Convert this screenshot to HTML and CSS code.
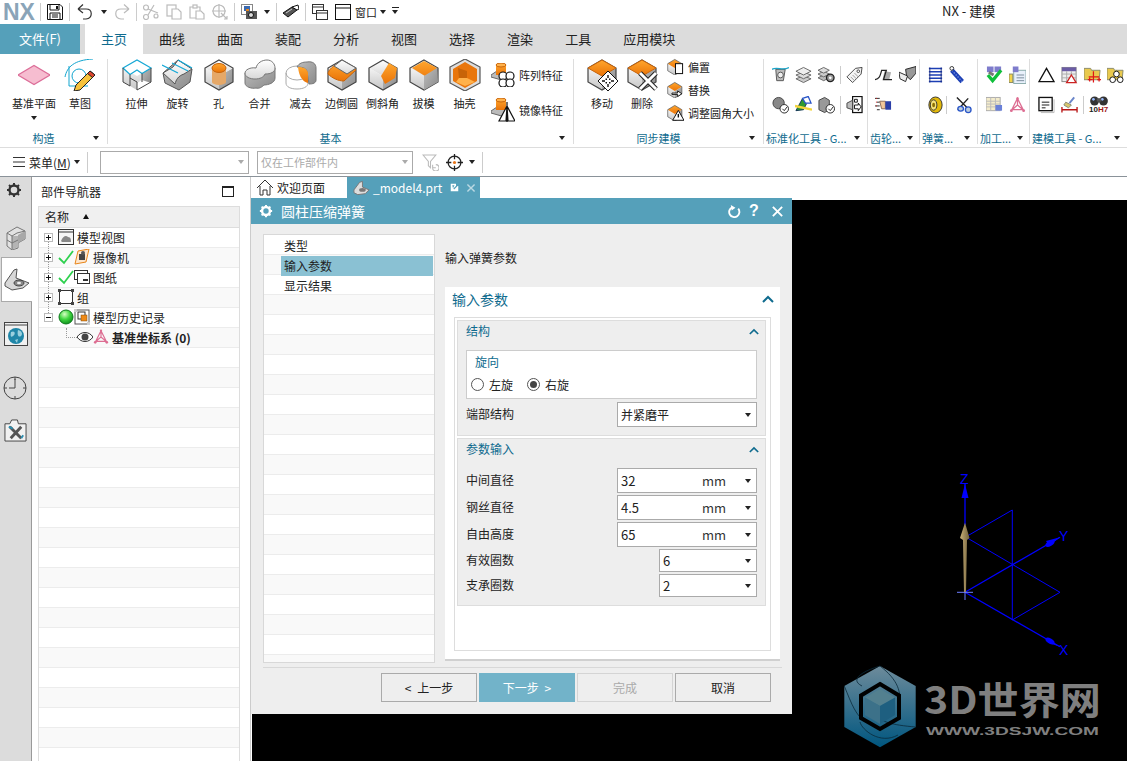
FILE: index.html
```html
<!DOCTYPE html>
<html lang="zh-CN">

<head>
    <meta charset="UTF-8">
    <meta name="viewport" content="width=device-width, initial-scale=1.0">
    <title>NX - 建模</title>
    <link rel="stylesheet" href="styles.css">
</head>

<body>
    <!-- icon sheet -->
    <svg class="icon-sheet" xmlns="http://www.w3.org/2000/svg">
        <defs>
            <linearGradient id="gTop" x1="0" y1="0" x2="0" y2="1"><stop offset="0" stop-color="#ffffff"/><stop offset="1" stop-color="#d8d8d8"/></linearGradient>
            <linearGradient id="gLeft" x1="0" y1="0" x2="0" y2="1"><stop offset="0" stop-color="#f4f4f4"/><stop offset="1" stop-color="#c4c4c4"/></linearGradient>
            <linearGradient id="gRight" x1="0" y1="0" x2="1" y2="1"><stop offset="0" stop-color="#bdbdbd"/><stop offset="1" stop-color="#8a8a8a"/></linearGradient>
            <linearGradient id="gOrange" x1="0" y1="0" x2="0" y2="1"><stop offset="0" stop-color="#ffa62e"/><stop offset="1" stop-color="#ea7408"/></linearGradient>
            <radialGradient id="gBall" cx="0.4" cy="0.3" r="0.75"><stop offset="0" stop-color="#d6ffc4"/><stop offset="0.5" stop-color="#3fd63f"/><stop offset="1" stop-color="#0c8a1c"/></radialGradient>
            <linearGradient id="gTan" x1="0" y1="0" x2="1" y2="0"><stop offset="0" stop-color="#c9b078"/><stop offset="1" stop-color="#6f5f3a"/></linearGradient>
            <linearGradient id="gHexTop" x1="0" y1="0" x2="0" y2="1"><stop offset="0" stop-color="#6d8b9b"/><stop offset="1" stop-color="#00567f"/></linearGradient>
            <g id="cube">
                <polygon points="2,9 16,17 16,31 2,23" fill="url(#gLeft)"/>
                <polygon points="30,9 16,17 16,31 30,23" fill="url(#gRight)"/>
                <polygon points="16,1 30,9 16,17 2,9" fill="url(#gTop)"/>
                <polygon points="16,1 30,9 30,23 16,31 2,23 2,9" fill="none" stroke="#444" stroke-width="1.2"/>
            </g>
            <g id="cubeOrange">
                <polygon points="1,8 11,14 11,24 1,18" fill="url(#gLeft)"/>
                <polygon points="21,8 11,14 11,24 21,18" fill="url(#gRight)"/>
                <polygon points="11,2 21,8 11,14 1,8" fill="url(#gOrange)"/>
                <polygon points="11,2 21,8 21,18 11,24 1,18 1,8" fill="none" stroke="#555"/>
            </g>
        </defs>
        <symbol id="i-plane" viewBox="0 0 32 32"><polygon points="0,16 16,6.5 32,16 16,25.5" fill="#f6bdd0" stroke="#dc6d98" stroke-width="1.2"/></symbol>
        <symbol id="i-sketch" viewBox="0 0 32 32">
            <path d="M1 18C3 8 10 1 29 0" fill="none" stroke="#12a5cf" stroke-width="1"/>
            <path d="M5 7V27H24" fill="none" stroke="#12a5cf"/>
            <circle cx="15" cy="17" r="7" fill="none" stroke="#12a5cf"/>
            <polygon points="26,12 31,16 16,31 10,32 12,26" fill="#f6c23c" stroke="#222"/>
            <polygon points="26,12 31,16 28.5,18.5 23.5,14.5" fill="#e0452f" stroke="#222"/>
        </symbol>
        <symbol id="i-extrude" viewBox="0 0 32 32">
            <polygon points="2,9 2,23 16,31 16,24 21,21 21,14 16,17" fill="url(#gLeft)"/>
            <polygon points="21,14 21,21 30,24 30,9" fill="url(#gRight)"/>
            <path d="M2 9L16 1L30 9L21 14.5L16 11L9 15.5z" fill="#fff" stroke="#16a8d6" stroke-width="1.2"/>
            <path d="M2 9V23L9 27V19L16 23V31L30 23V9M9 15.5V19M21 14.5V23" fill="none" stroke="#444"/>
        </symbol>
        <symbol id="i-revolve" viewBox="0 0 32 32">
            <polygon points="1,14 3,24 17,31 28,23 30,10 16,1" fill="url(#gRight)" stroke="#555"/>
            <path d="M1 14L11 8L16 1L30 10L22 15C16 17 14 21 13 25z" fill="url(#gTop)" stroke="#555"/>
            <path d="M0 6L16 14M10 4L26 12M16 1L30 9" stroke="#16a8d6" stroke-width="1.2" fill="none"/>
        </symbol>
        <symbol id="i-hole" viewBox="0 0 32 32">
            <use href="#cube"/>
            <rect x="9" y="8" width="14" height="15" fill="#e5a868"/>
            <ellipse cx="16" cy="23" rx="7" ry="3" fill="#e5a868"/>
            <ellipse cx="16" cy="9" rx="7" ry="4.5" fill="url(#gOrange)" stroke="#c8640a"/>
        </symbol>
        <symbol id="i-unite" viewBox="0 0 32 32">
            <path d="M1 14V24C1 28 8 30 12 29C15 30 18 28 20 26C24 26 31 24 31 19V9L20 11L12 12z" fill="url(#gRight)" stroke="#777"/>
            <path d="M1 14C1 11 6 8 12 9C13 4 18 1 23 1C28 1 31 5 31 9C31 13 27 15 21 15C20 18 16 20 11 20C6 20 1 18 1 14z" fill="url(#gTop)" stroke="#777"/>
        </symbol>
        <symbol id="i-subtract" viewBox="0 0 32 32">
            <ellipse cx="12" cy="14" rx="11" ry="7" fill="none" stroke="#aaa"/>
            <path d="M1 14V24C1 28 6 30 12 30S23 28 23 24V14" fill="none" stroke="#aaa"/>
            <path d="M22 3C28 2 31 5 31 9V21C31 24 28 25 24 25L22 13C22 10 19 8 12 8C14 4 18 3 22 3z" fill="url(#gRight)" stroke="#777"/>
            <path d="M13 8C19 8 22 10 23 14V24C19 23 14 19 13 8z" fill="url(#gOrange)"/>
        </symbol>
        <symbol id="i-blend" viewBox="0 0 32 32">
            <use href="#cube"/>
            <path d="M2 15C2 11 8 6 12 5L16 3L30 11L18 22C12 22 6 19 2 15z" fill="url(#gOrange)" stroke="#c8640a"/>
            <path d="M16 1L30 9L21 15L8 7z" fill="url(#gTop)" stroke="#666"/>
        </symbol>
        <symbol id="i-chamfer" viewBox="0 0 32 32">
            <use href="#cube"/>
            <polygon points="14,17 22,4 30,9 28,19 18,25" fill="url(#gOrange)"/>
        </symbol>
        <symbol id="i-draft" viewBox="0 0 32 32">
            <use href="#cube"/>
            <polygon points="16,2 29,9 25,22 4,9" fill="url(#gOrange)"/>
            <polygon points="16,17 29,9 30,23 16,31" fill="url(#gRight)"/>
        </symbol>
        <symbol id="i-shell" viewBox="0 0 32 32">
            <polygon points="16,0 31,8 31,24 16,32 1,24 1,8" fill="#ddd" stroke="#555" stroke-width="1.2"/>
            <polygon points="16,3 28,10 28,22 16,29 4,22 4,10" fill="#e9760c"/>
            <polygon points="9,9 18,12 18,19 10,19" fill="#c86408"/>
            <polygon points="18,19 26,23 16,27 7,23 10,19" fill="#ffb14a"/>
        </symbol>
        <symbol id="i-move" viewBox="0 0 32 32">
            <use href="#cube"/>
            <polygon points="16,1 30,9 16,17 2,9" fill="url(#gOrange)" stroke="#c8640a"/>
        </symbol>
        <symbol id="o-move" viewBox="0 0 20 20">
            <polygon points="10,0 20,10 10,20 0,10" fill="#fff" stroke="#111"/>
            <path d="M10 4v3M10 13v3M4 10h3M13 10h3" stroke="#111" stroke-width="1.4" fill="none"/>
            <path d="M7.500 7.500h1.500v1.500H7.500zM11 7.500h1.500v1.500H11zM7.500 11h1.500v1.500H7.500zM11 11h1.500v1.500H11z" fill="#111"/>
        </symbol>
        <symbol id="o-delete" viewBox="0 0 20 20">
            <path d="M2 2L18 18M18 2L2 18" stroke="#222" stroke-width="5"/>
            <path d="M2 2L18 18M18 2L2 18" stroke="#fff" stroke-width="3"/>
        </symbol>
        <symbol id="s-pattern" viewBox="0 0 24 24">
            <polygon points="0,12 6,8 22,12 14,18 0,14" fill="#bbb" stroke="#666"/>
            <rect x="5" y="1" width="10" height="11" fill="url(#gOrange)"/>
            <ellipse cx="10" cy="2" rx="5" ry="2" fill="#ffb14a" stroke="#c8640a"/>
            <circle cx="12" cy="13" r="4" fill="#fff" stroke="#111" stroke-width="1.2"/><circle cx="19" cy="13" r="4" fill="#fff" stroke="#111" stroke-width="1.2"/>
            <circle cx="12" cy="20" r="4" fill="#fff" stroke="#111" stroke-width="1.2"/><circle cx="19" cy="20" r="4" fill="#fff" stroke="#111" stroke-width="1.2"/>
        </symbol>
        <symbol id="s-mirror" viewBox="0 0 24 24">
            <polygon points="0,13 6,9 18,13 14,19 0,15" fill="#bbb" stroke="#666"/>
            <rect x="5" y="1" width="10" height="11" fill="url(#gOrange)"/>
            <ellipse cx="10" cy="2" rx="5" ry="2" fill="#ffb14a" stroke="#c8640a"/>
            <path d="M16 8L8 23H15zM16 8L24 23H17zM16 4V24" fill="#fff" stroke="#111" stroke-width="1.2"/>
        </symbol>
        <symbol id="s-offset" viewBox="0 0 24 24"><use href="#cubeOrange"/><rect x="12" y="8" width="10" height="14" fill="#fff" stroke="#111" stroke-width="1.4"/></symbol>
        <symbol id="s-replace" viewBox="0 0 24 24"><use href="#cubeOrange"/><path d="M7 17h8v-3l6 4-6 4v-3H7zM6 15h0" fill="#fff" stroke="#111" stroke-width="1.3"/></symbol>
        <symbol id="s-resize" viewBox="0 0 24 24"><use href="#cubeOrange"/><path d="M16 9L24 23H8z" fill="#fff" stroke="#111" stroke-width="1.4"/><path d="M16 14v5" stroke="#111" stroke-width="2"/></symbol>
        <symbol id="m-std1" viewBox="0 0 18 18"><polygon points="4,3 14,3 12,15 5,15" fill="#bbb" stroke="#555"/><path d="M0 3C5 0 12 5 18 1" fill="none" stroke="#1da5c9" stroke-width="1.4"/><circle cx="9" cy="9" r="3" fill="#eee" stroke="#555"/></symbol>
        <symbol id="m-layers" viewBox="0 0 18 18"><polygon points="9,10 17,13 9,17 1,13" fill="#ccc" stroke="#666"/><polygon points="9,6 17,9 9,13 1,9" fill="#ddd" stroke="#666"/><polygon points="9,1 17,5 9,9 1,5" fill="#eee" stroke="#666"/></symbol>
        <symbol id="m-layersgear" viewBox="0 0 18 18"><polygon points="6,9 12,12 6,15 0,12" fill="#bbb" stroke="#666"/><polygon points="6,5 12,8 6,11 0,8" fill="#ccc" stroke="#666"/><polygon points="6,1 12,4 6,7 0,4" fill="#ddd" stroke="#666"/><circle cx="13" cy="12" r="4" fill="#999" stroke="#222" stroke-width="1.4"/><circle cx="13" cy="12" r="1.4" fill="#fff"/></symbol>
        <symbol id="m-tag" viewBox="0 0 18 18"><polygon points="1,11 10,2 17,1 16,8 7,17" fill="#f4f4f4" stroke="#444"/><circle cx="13" cy="5" r="1.4" fill="#fff" stroke="#444"/><path d="M5 11l4 4M7 9l4 4M9 7l4 4" stroke="#999"/></symbol>
        <symbol id="m-std2" viewBox="0 0 18 18"><ellipse cx="7" cy="7" rx="6" ry="6" fill="#888" stroke="#444"/><circle cx="13" cy="13" r="4.5" fill="#fff" stroke="#222"/><path d="M11 13l2 2 3-4" fill="none" stroke="#222"/></symbol>
        <symbol id="m-std3" viewBox="0 0 18 18"><polygon points="1,15 8,2 12,8 9,14" fill="#2f9a2f" stroke="#135"/><polygon points="8,2 14,0 17,7 11,7" fill="#fff" stroke="#2a56c8" stroke-width="1.4"/><path d="M0 10L18 14" stroke="#f2d43a" stroke-width="2.5"/></symbol>
        <symbol id="m-std4" viewBox="0 0 18 18"><polygon points="1,4 7,1 12,4 12,14 7,17 1,14" fill="#999" stroke="#444"/><circle cx="13" cy="13" r="4.5" fill="#fff" stroke="#222"/><path d="M11 13l2 2 3-4" fill="none" stroke="#222"/></symbol>
        <symbol id="m-print" viewBox="0 0 18 18"><rect x="7" y="0" width="10" height="17" fill="#fff" stroke="#111" stroke-width="1.3"/><polygon points="1,7 7,4 7,14 1,12" fill="#bbb" stroke="#444"/><path d="M9 3h3v3H9zM9 9h4v-2l3 4-3 4v-2H9z" fill="#fff" stroke="#111"/></symbol>
        <symbol id="m-gear1" viewBox="0 0 18 18"><path d="M10 5L17 6L15 14H8z" fill="#aaa"/><path d="M0 14C4 13 5 12 7 4H12L9 14H18" fill="none" stroke="#222" stroke-width="1.3"/></symbol>
        <symbol id="m-gear2" viewBox="0 0 18 18"><path d="M7 3L18 0V7L12 14L8 10z" fill="#999" stroke="#222"/><path d="M0 6L9 10L7 16L1 13z" fill="#eee" stroke="#222"/></symbol>
        <symbol id="m-hand" viewBox="0 0 18 18"><path d="M0 2h5M2 6h3M0 10h5M2 14h3" stroke="#222"/><path d="M1 2h1M1 6h1M1 10h1" stroke="#d22"/><path d="M5 5h6v8H7z" fill="#f2c79a" stroke="#865"/><rect x="11" y="5" width="6" height="9" fill="#2b3fa8"/></symbol>
        <symbol id="m-spring" viewBox="0 0 18 18"><g fill="none" stroke="#1c3fb4" stroke-width="1.6"><path d="M2 2h14M2 5.500h14M2 9h14M2 12.500h14M2 16h14"/></g><path d="M3 1V17M15 1V17" stroke="#1c2e80"/></symbol>
        <symbol id="m-spring2" viewBox="0 0 18 18"><path d="M3 4L14 16" stroke="#1c3fb4" stroke-width="5"/><path d="M3 4L14 16" stroke="#6c8be0" stroke-width="1.5" stroke-dasharray="1.500 1.500"/><circle cx="3" cy="2" r="2" fill="none" stroke="#333"/></symbol>
        <symbol id="m-coil" viewBox="0 0 18 18"><ellipse cx="9" cy="9" rx="7" ry="8.500" fill="#e3b90a" stroke="#333"/><ellipse cx="7" cy="9" rx="3.500" ry="5.500" fill="#f6e27a" stroke="#333"/><ellipse cx="7" cy="9" rx="1.500" ry="2.500" fill="#8a6d00"/></symbol>
        <symbol id="m-scissor" viewBox="0 0 18 18"><path d="M2 1L14 13M14 2L3 14" stroke="#222" stroke-width="1.5"/><circle cx="14" cy="14" r="3" fill="#bcd" stroke="#2a56c8" stroke-width="1.4"/><ellipse cx="6" cy="13" rx="3" ry="2.500" fill="#bcd" stroke="#2a56c8" stroke-width="1.4"/></symbol>
        <symbol id="m-check" viewBox="0 0 18 18"><rect x="1" y="0" width="7" height="6" fill="#7e7ccc"/><rect x="9" y="0" width="7" height="6" fill="#7e7ccc"/><path d="M3 6L8 9" stroke="#777" stroke-width="3"/><path d="M2 9L7 15L16 4" fill="none" stroke="#0fbf3b" stroke-width="3.500"/></symbol>
        <symbol id="m-list" viewBox="0 0 18 18"><rect x="5" y="4" width="13" height="14" fill="#e8f0fb" stroke="#8aa"/><rect x="4" y="0" width="6" height="6" fill="#7e7ccc"/><rect x="0" y="8" width="4" height="9" fill="#f2d44a" stroke="#886"/><path d="M8 9h8M8 12h8M8 15h8" stroke="#789"/></symbol>
        <symbol id="m-grid" viewBox="0 0 18 18"><rect x="0" y="1" width="15" height="14" fill="#f4eccb" stroke="#aaa"/><path d="M0 5h15M0 8h15M0 11h15M5 1v14M10 1v14" stroke="#bbb"/><rect x="10" y="9" width="7" height="6" fill="#6a80d8"/></symbol>
        <symbol id="m-csys" viewBox="0 0 18 18"><g stroke="#dd6d92" stroke-width="1.3" fill="none"><path d="M9 1V9L2 15M9 9L16 15M9 2L3 14H15Z"/></g><circle cx="9" cy="2" r="1.300" fill="#dd6d92"/><circle cx="2.500" cy="15" r="1.500" fill="#dd6d92"/><circle cx="15.500" cy="15" r="1.500" fill="#dd6d92"/></symbol>
        <symbol id="m-tri" viewBox="0 0 18 18"><polygon points="9,2 17,16 1,16" fill="#fff" stroke="#111" stroke-width="1.4"/></symbol>
        <symbol id="m-table" viewBox="0 0 18 18"><rect x="1" y="1" width="15" height="15" fill="#eee" stroke="#888"/><rect x="1" y="1" width="15" height="4" fill="#6b5ca5"/><path d="M1 8h15M1 12h15M6 5v11M11 5v11" stroke="#aaa"/><polygon points="11,9 16,17 6,17" fill="#fff" stroke="#c22" stroke-width="1.4"/></symbol>
        <symbol id="m-folder1" viewBox="0 0 18 18"><polygon points="0,2 7,2 8,4 17,4 16,14 0,14" fill="#e9c94e" stroke="#886"/><path d="M10 5v12M5 11h11M4 14h5M6 12v4M14 14h4M16 12v4" stroke="#e01616" stroke-width="1.3"/></symbol>
        <symbol id="m-folder2" viewBox="0 0 18 18"><polygon points="0,2 7,2 8,4 17,4 16,14 0,14" fill="#e9c94e" stroke="#886"/><circle cx="10" cy="8" r="3" fill="#fff" stroke="#111"/><circle cx="6" cy="14" r="3" fill="#fff" stroke="#111"/><circle cx="14" cy="14" r="3" fill="#fff" stroke="#111"/></symbol>
        <symbol id="m-note" viewBox="0 0 18 18"><rect x="1" y="1" width="14" height="14" fill="#fff" stroke="#111" stroke-width="1.4"/><path d="M4 6h8M4 9h8M4 12h4" stroke="#111"/><path d="M3 17h14M17 3v14" stroke="#bbb"/></symbol>
        <symbol id="m-brush" viewBox="0 0 18 18"><path d="M9 7L14 1" stroke="#6a85c9" stroke-width="2"/><polygon points="5,6 11,9 8,12 3,9" fill="#d8c66e" stroke="#887"/><path d="M1 11v6M17 11v6M1 14h16" stroke="#b81414" stroke-width="1.4"/></symbol>
        <symbol id="m-bino" viewBox="0 0 18 9"><circle cx="5" cy="4.500" r="4" fill="#333"/><circle cx="13" cy="4.500" r="4" fill="#333"/><circle cx="4" cy="3" r="1.200" fill="#9bf"/><circle cx="12" cy="3" r="1.200" fill="#9bf"/><rect x="7" y="2" width="4" height="3" fill="#555"/></symbol>
        <symbol id="t-save" viewBox="0 0 16 16"><path d="M.5.500H13L15.500 3V15.500H.5z" fill="#fff" stroke="#111"/><path d="M3 1V6H12V1M3 15V9H13V15M5 11H11M5 13H11" fill="none" stroke="#111"/><rect x="9" y="2" width="2" height="3" fill="#111"/></symbol>
        <symbol id="t-undo" viewBox="0 0 16 16"><path d="M1 5H9C16 5 16 14 9 15H6M1 5L6 .5M1 5L6 9" fill="none" stroke="currentColor" stroke-width="1.200"/></symbol>
        <symbol id="t-cut" viewBox="0 0 16 16"><g fill="none" stroke="#bbb" stroke-width="1.200"><circle cx="3" cy="13" r="2.500"/><path d="M5 11L11 1M5 5L15 9"/><circle cx="3" cy="3.500" r="2.500"/><circle cx="13" cy="12" r="2"/></g></symbol>
        <symbol id="t-copy" viewBox="0 0 16 16"><g fill="#fff" stroke="#bbb" stroke-width="1.200"><rect x="1" y="1" width="9" height="11"/><path d="M6 5H12L15 8V15H6z"/></g></symbol>
        <symbol id="t-paste" viewBox="0 0 16 16"><g fill="#fff" stroke="#bbb" stroke-width="1.200"><path d="M1 3H11V14H1z"/><rect x="4" y="1" width="4" height="3"/><path d="M7 7H12L15 10V15H7z"/></g></symbol>
        <symbol id="t-target" viewBox="0 0 16 16"><g fill="none" stroke="#bbb" stroke-width="1.200"><circle cx="7" cy="7" r="6"/><path d="M7 0V14M0 7H14"/><path d="M9 9L15 15M12 15H15V12"/></g></symbol>
        <symbol id="t-camera" viewBox="0 0 16 16"><rect x=".5" y=".5" width="11" height="10" fill="#fff" stroke="#111" stroke-dasharray="1 1"/><rect x="3" y="2" width="6" height="5" fill="#3a69b0"/><rect x="5" y="7" width="11" height="8" fill="#555"/><circle cx="10" cy="11" r="2.500" fill="#ddd" stroke="#111"/><rect x="5" y="5" width="3" height="2" fill="#e8861a"/></symbol>
        <symbol id="t-brush" viewBox="0 0 16 16"><path d="M0 9L9 3L14 6L5 13z" fill="#555" stroke="#111"/><path d="M9 3L15 1L16 5L14 6z" fill="#fff" stroke="#111"/><path d="M3 9L9 5" stroke="#ccc"/></symbol>
        <symbol id="t-cascade" viewBox="0 0 16 16"><g fill="#fff" stroke="#333"><rect x=".5" y=".5" width="11" height="9"/><rect x="4.500" y="6.500" width="11" height="9"/></g><path d="M1 3h10M5 9h10" stroke="#333"/></symbol>
        <symbol id="t-window" viewBox="0 0 16 16"><rect x=".5" y=".5" width="15" height="15" fill="#fff" stroke="#111"/><path d="M1 4H15" stroke="#111"/></symbol>
        <symbol id="b-filter" viewBox="0 0 16 16"><path d="M1 1H13L8 7V13L6 11V7z" fill="#fff" stroke="#bbb"/><path d="M10 13a3 3 0 1 0 3-3M10 10v3h3" fill="none" stroke="#bbb"/></symbol>
        <symbol id="b-snap" viewBox="0 0 16 16"><circle cx="8" cy="8" r="6" fill="none" stroke="#222" stroke-width="1.200"/><path d="M8 0V5M8 11V16M0 8H5M11 8H16" stroke="#222" stroke-width="1.200"/><circle cx="8" cy="8" r="1.500" fill="#e8761a"/></symbol>
        <symbol id="n-gear" viewBox="0 0 16 16"><circle cx="8" cy="8" r="4.500" fill="none" stroke="#333" stroke-width="2.400"/><path d="M8 1V3M8 13V15M1 8H3M13 8H15M3 3L4.500 4.500M11.500 11.500L13 13M3 13L4.500 11.500M11.500 4.500L13 3" stroke="#333" stroke-width="2"/></symbol>
        <symbol id="n-part" viewBox="0 0 20 24"><polygon points="1,7 11,1 19,5 19,13 12,17 12,22 6,24 1,20" fill="#e2e2e2" stroke="#777"/><polygon points="6,10 6,24 12,21 12,10" fill="#b4b4b4"/><polygon points="12,9 19,5 19,13 12,17" fill="#a8a8a8"/><path d="M1 7L6 10L11 7L19 5M6 10V24M1 14L6 17L12 14" fill="none" stroke="#777"/></symbol>
        <symbol id="n-bracket" viewBox="0 0 26 24"><path d="M1 15L10 2L13 1L12 10L25 15L19 20L8 22L1 18z" fill="#d8d8d8" stroke="#555"/><ellipse cx="15" cy="15" rx="5" ry="3" fill="#888" stroke="#444"/><ellipse cx="15" cy="15" rx="2" ry="1.300" fill="#eee"/></symbol>
        <symbol id="n-globe" viewBox="0 0 24 24"><rect x=".5" y=".5" width="23" height="23" fill="#f1f1f1" stroke="#444"/><path d="M1 3H23" stroke="#444"/><circle cx="12" cy="14" r="8" fill="#1f86a8"/><path d="M7 10C11 8 12 12 9 14C7 16 6 14 7 10zM14 8C18 9 19 12 17 14C14 16 13 12 14 8zM11 18L14 17L13 21z" fill="#9ad0de"/></symbol>
        <symbol id="n-clock" viewBox="0 0 24 24"><circle cx="12" cy="12" r="11" fill="none" stroke="#444"/><path d="M12 3V12H6M12 1V4M12 20V23M1 12H4M20 12H23" fill="none" stroke="#444"/></symbol>
        <symbol id="n-tools" viewBox="0 0 24 24"><path d="M1 5H6L8 1H14L15 5H23V23H1z" fill="#f2f2f2" stroke="#444"/><path d="M6 8L18 20M18 8L7 20" stroke="#555" stroke-width="3"/><path d="M5 8L9 10M18 20L20 17" stroke="#2b8eb0" stroke-width="2"/></symbol>
        <symbol id="n-view" viewBox="0 0 16 16"><rect x=".5" y=".5" width="15" height="15" fill="#f6f6f6" stroke="#333"/><path d="M1 3H15" stroke="#333"/><path d="M3 12C5 7 8 6 10 8C13 8 13 11 13 13H4z" fill="#888"/></symbol>
        <symbol id="n-cam" viewBox="0 0 16 16"><polygon points="4,2 15,0 12,13 1,15" fill="#fde6ce" stroke="#e8861a"/><rect x="5" y="5" width="6" height="6" fill="#444"/><circle cx="9" cy="4" r="2" fill="#555"/></symbol>
        <symbol id="n-sheet" viewBox="0 0 16 16"><rect x=".5" y="1.500" width="13" height="9" fill="#fff" stroke="#333"/><rect x="3.500" y="4.500" width="12" height="10" fill="#fff" stroke="#333"/><path d="M9 11h5" stroke="#333" stroke-width="2"/></symbol>
        <symbol id="n-group" viewBox="0 0 16 16"><rect x="1.500" y="1.500" width="13" height="13" fill="#fff" stroke="#333"/><path d="M0 0h3v3H0zM13 0h3v3h-3zM0 13h3v3H0zM13 13h3v3h-3z" fill="#444"/></symbol>
        <symbol id="n-check" viewBox="0 0 16 16"><path d="M1 9L6 14L15 2" fill="none" stroke="#2fd14f" stroke-width="1.800"/></symbol>
        <symbol id="n-ball" viewBox="0 0 16 16"><circle cx="8" cy="8" r="7" fill="url(#gBall)" stroke="#0b7a1a"/></symbol>
        <symbol id="n-hist" viewBox="0 0 16 16"><rect x="1" y="1" width="14" height="14" fill="#fff" stroke="#555"/><path d="M0 0h3v3H0zM13 13h3v3h-3z" fill="#ccc"/><rect x="4" y="3" width="7" height="7" fill="#fff" stroke="#333"/><rect x="7" y="6" width="6" height="6" fill="#ef8a17" stroke="#7a4a10" stroke-width=".5"/></symbol>
        <symbol id="n-eye" viewBox="0 0 16 12"><path d="M0 6C4 0 12 0 16 6C12 12 4 12 0 6z" fill="#fff" stroke="#333"/><circle cx="8" cy="6" r="3.500" fill="#444"/></symbol>
        <symbol id="d-home" viewBox="0 0 16 16"><path d="M0 8L8 0L16 8M3 6V15H6V10H10V15H13V6" fill="#fff" stroke="#333"/></symbol>
        <symbol id="d-tabpart" viewBox="0 0 18 16"><path d="M1 10L7 2L10 1L10 7L17 10L13 14L5 15L1 13z" fill="#ddd" stroke="#777"/><ellipse cx="10" cy="10" rx="3.500" ry="2" fill="#777"/></symbol>
        <symbol id="d-tabedit" viewBox="0 0 12 12"><path d="M1 1H8V4L11 4V11H1z" fill="#fff"/><path d="M3 3H6L4 7z" fill="#55a0ba"/><path d="M5 8L11 2" stroke="#55a0ba" stroke-width="1.500"/></symbol>
        <symbol id="d-gear" viewBox="0 0 16 16"><circle cx="8" cy="8" r="4.500" fill="none" stroke="#fff" stroke-width="2.800"/><path d="M8 1V3M8 13V15M1 8H3M13 8H15M3 3L4.500 4.500M11.500 11.500L13 13M3 13L4.500 11.500M11.500 4.500L13 3" stroke="#fff" stroke-width="2.200"/></symbol>
        <symbol id="d-reset" viewBox="0 0 14 14"><path d="M4.500 2.500A5.500 5.500 0 1 0 11 4" fill="none" stroke="#fff" stroke-width="2"/><path d="M3 0L8 3L4 6z" fill="#fff"/></symbol>
        <symbol id="d-close" viewBox="0 0 14 14"><path d="M2 2L12 12M12 2L2 12" stroke="#fff" stroke-width="2"/></symbol>
        <symbol id="d-chev" viewBox="0 0 12 8"><path d="M1 7L6 2L11 7" fill="none" stroke="#0f6b8e" stroke-width="2"/></symbol>
    </svg>

    <div class="titlebar">
        <span class="nx-logo">NX</span>
        <i class="vsep"></i>
        <svg class="tb-icon tb-save"><use href="#t-save"/></svg>
        <i class="vsep"></i>
        <svg class="tb-icon tb-undo"><use href="#t-undo"/></svg>
        <i class="caret"></i>
        <svg class="tb-icon tb-redo"><use href="#t-undo"/></svg>
        <i class="vsep"></i>
        <svg class="tb-icon"><use href="#t-cut"/></svg>
        <svg class="tb-icon"><use href="#t-copy"/></svg>
        <svg class="tb-icon"><use href="#t-paste"/></svg>
        <svg class="tb-icon"><use href="#t-target"/></svg>
        <i class="vsep"></i>
        <svg class="tb-icon"><use href="#t-camera"/></svg>
        <i class="caret"></i>
        <i class="vsep"></i>
        <svg class="tb-icon"><use href="#t-brush"/></svg>
        <i class="vsep"></i>
        <svg class="tb-icon"><use href="#t-cascade"/></svg>
        <svg class="tb-icon"><use href="#t-window"/></svg>
        <span class="tb-text">窗口</span>
        <i class="caret caret-tight"></i>
        <i class="caret caret-bar"></i>
        <span class="app-title">NX - 建模</span>
    </div>

    <div class="tabs">
        <div class="tab-file">文件(F)</div>
        <div class="tab active">主页</div>
        <div class="tab">曲线</div>
        <div class="tab">曲面</div>
        <div class="tab">装配</div>
        <div class="tab">分析</div>
        <div class="tab">视图</div>
        <div class="tab">选择</div>
        <div class="tab">渲染</div>
        <div class="tab">工具</div>
        <div class="tab">应用模块</div>
    </div>

    <div class="ribbon">
        <div class="group g-build">
            <div class="group-body">
                <div class="big wide"><svg><use href="#i-plane"/></svg><span>基准平面</span><i class="caret"></i></div>
                <div class="big wide"><svg><use href="#i-sketch"/></svg><span>草图</span></div>
            </div>
            <div class="group-foot"><span>构造</span><i class="caret"></i></div>
        </div>
        <div class="group g-basic">
            <div class="group-body">
                <div class="big"><svg><use href="#i-extrude"/></svg><span>拉伸</span></div>
                <div class="big"><svg><use href="#i-revolve"/></svg><span>旋转</span></div>
                <div class="big"><svg><use href="#i-hole"/></svg><span>孔</span></div>
                <div class="big"><svg><use href="#i-unite"/></svg><span>合并</span></div>
                <div class="big"><svg><use href="#i-subtract"/></svg><span>减去</span></div>
                <div class="big"><svg><use href="#i-blend"/></svg><span>边倒圆</span></div>
                <div class="big"><svg><use href="#i-chamfer"/></svg><span>倒斜角</span></div>
                <div class="big"><svg><use href="#i-draft"/></svg><span>拔模</span></div>
                <div class="big"><svg><use href="#i-shell"/></svg><span>抽壳</span></div>
                <div class="feature-stack">
                    <div class="feature"><svg><use href="#s-pattern"/></svg><span>阵列特征</span></div>
                    <div class="feature"><svg><use href="#s-mirror"/></svg><span>镜像特征</span></div>
                </div>
            </div>
            <div class="group-foot"><span>基本</span><i class="caret"></i></div>
        </div>
        <div class="group g-sync">
            <div class="group-body">
                <div class="big overlay-host"><svg><use href="#i-move"/></svg><svg class="overlay"><use href="#o-move"/></svg><span>移动</span></div>
                <div class="big overlay-host"><svg><use href="#i-move"/></svg><svg class="overlay"><use href="#o-delete"/></svg><span>删除</span></div>
                <div class="sync-stack">
                    <div class="sync-item"><svg><use href="#s-offset"/></svg><span>偏置</span></div>
                    <div class="sync-item"><svg><use href="#s-replace"/></svg><span>替换</span></div>
                    <div class="sync-item"><svg><use href="#s-resize"/></svg><span>调整圆角大小</span></div>
                </div>
            </div>
            <div class="group-foot"><span>同步建模</span><i class="caret"></i></div>
        </div>
        <div class="group g-std">
            <div class="mini-grid">
                <svg><use href="#m-std1"/></svg><svg><use href="#m-layers"/></svg><svg><use href="#m-layersgear"/></svg><i class="mini-sep"></i><svg><use href="#m-tag"/></svg>
                <svg><use href="#m-std2"/></svg><svg><use href="#m-std3"/></svg><svg><use href="#m-std4"/></svg><i class="mini-sep"></i><svg><use href="#m-print"/></svg>
            </div>
            <div class="group-foot left"><span>标准化工具 - G...</span><i class="caret"></i></div>
        </div>
        <div class="group g-gear">
            <div class="mini-grid">
                <svg><use href="#m-gear1"/></svg><svg><use href="#m-gear2"/></svg>
                <svg><use href="#m-hand"/></svg>
            </div>
            <div class="group-foot left"><span>齿轮...</span><i class="caret"></i></div>
        </div>
        <div class="group g-spring">
            <div class="mini-grid">
                <svg><use href="#m-spring"/></svg><i class="mini-sep blank"></i><svg><use href="#m-spring2"/></svg>
                <svg><use href="#m-coil"/></svg><i class="mini-sep far"></i><svg><use href="#m-scissor"/></svg>
            </div>
            <div class="group-foot left"><span>弹簧...</span><i class="caret"></i></div>
        </div>
        <div class="group g-cam">
            <div class="mini-grid">
                <svg><use href="#m-check"/></svg><svg><use href="#m-list"/></svg>
                <svg><use href="#m-grid"/></svg><svg><use href="#m-csys"/></svg>
            </div>
            <div class="group-foot left"><span>加工...</span><i class="caret"></i></div>
        </div>
        <div class="group g-model">
            <div class="mini-grid">
                <svg><use href="#m-tri"/></svg><svg><use href="#m-table"/></svg><svg><use href="#m-folder1"/></svg><svg><use href="#m-folder2"/></svg>
                <svg><use href="#m-note"/></svg><svg><use href="#m-brush"/></svg><i class="mini-sep"></i>
                <div class="bino"><svg><use href="#m-bino"/></svg><span>10<b>H7</b></span></div>
            </div>
            <div class="group-foot left"><span>建模工具 - G...</span><i class="caret"></i></div>
        </div>
    </div>

    <div class="toolbar">
        <svg class="menu-icon" viewBox="0 0 14 12"><path d="M1 1.500H13M1 6H13M1 10.500H13" stroke="#333"/></svg>
        <span class="menu-text">菜单(<u>M</u>)</span>
        <i class="caret"></i>
        <i class="vsep"></i>
        <div class="combo combo-a"><i class="caret light"></i></div>
        <div class="combo combo-b"><span>仅在工作部件内</span><i class="caret light"></i></div>
        <svg class="bar-icon first"><use href="#b-filter"/></svg>
        <svg class="bar-icon"><use href="#b-snap"/></svg>
        <i class="caret"></i>
        <i class="vsep"></i>
    </div>

    <div class="main">
        <div class="side-strip">
            <svg class="strip-gear"><use href="#n-gear"/></svg>
            <svg class="strip-part"><use href="#n-part"/></svg>
            <div class="strip-active"><svg><use href="#n-bracket"/></svg></div>
            <svg class="strip-globe"><use href="#n-globe"/></svg>
            <svg class="strip-clock"><use href="#n-clock"/></svg>
            <svg class="strip-tools"><use href="#n-tools"/></svg>
        </div>

        <div class="navigator">
            <div class="nav-title"><span>部件导航器</span><i class="restore"></i></div>
            <div class="tree">
                <div class="tree-head"><span>名称</span><i class="caret up"></i></div>
                <div class="tree-line"></div>
                <div class="tree-row"><i class="exp plus"></i><svg class="nd"><use href="#n-view"/></svg><span class="lab">模型视图</span></div>
                <div class="tree-row"><i class="exp plus"></i><svg class="nd"><use href="#n-check"/></svg><svg class="nd"><use href="#n-cam"/></svg><span class="lab">摄像机</span></div>
                <div class="tree-row"><i class="exp plus"></i><svg class="nd"><use href="#n-check"/></svg><svg class="nd"><use href="#n-sheet"/></svg><span class="lab">图纸</span></div>
                <div class="tree-row"><i class="exp plus"></i><svg class="nd"><use href="#n-group"/></svg><span class="lab">组</span></div>
                <div class="tree-row"><i class="exp"></i><svg class="nd"><use href="#n-ball"/></svg><svg class="nd"><use href="#n-hist"/></svg><span class="lab">模型历史记录</span></div>
                <div class="tree-row child"><i class="elbow"></i><svg class="nd"><use href="#n-eye"/></svg><svg class="nd"><use href="#m-csys"/></svg><span class="lab strong">基准坐标系 (0)</span></div>
            </div>
        </div>

        <div class="workarea">
            <div class="doc-tabs">
                <div class="doc-tab"><svg><use href="#d-home"/></svg><span>欢迎页面</span></div>
                <div class="doc-tab current"><svg class="tab-part"><use href="#d-tabpart"/></svg><span>_model4.prt</span><svg class="tab-edit"><use href="#d-tabedit"/></svg><svg class="tab-x"><use href="#d-close"/></svg></div>
            </div>

            <svg class="graphics" viewBox="252 200 875 561">
                <g stroke="#0000ff" fill="none">
                    <path d="M967.300 536L1012.300 510V620M967.300 538L1060 592.300L1012.300 620"/>
                    <path d="M965 592.300L1060 537.300M965 592.300L1060 646.700M965 484V525" stroke-width="1.300"/>
                    <path d="M957 592.300H973M965 587V600" stroke="#6f7fff"/>
                </g>
                <g fill="#0000ff">
                    <polygon points="965,484 961.500,498 968.500,498"/>
                    <polygon points="1060,537.300 1046,541 1049,546"/>
                    <polygon points="1060,646.700 1046,638 1049,643"/>
                    <ellipse cx="1050" cy="543.500" rx="5" ry="2.500" transform="rotate(-30 1050 543.500)"/>
                    <ellipse cx="1050" cy="641" rx="5" ry="2.500" transform="rotate(30 1050 641)"/>
                    <text class="axis" x="960" y="484">Z</text>
                    <text class="axis" x="1059" y="541">Y</text>
                    <text class="axis" x="1059" y="655">X</text>
                </g>
                <polygon points="965,522.700 969.500,538 967,540 966,592 964,592 963,540 960,538" fill="url(#gTan)"/>
                <g>
                    <polygon points="880,666 915.700,686 915.700,727 880,747.300 844.300,727 844.300,686" fill="url(#gHexTop)"/>
                    <path d="M880 666C898 680 902 692 899 708M915.700 727C892 725 878 722 870 710M844.300 686C852 705 856 716 866 722M862 686C850 680 860 672 880 666M898 735C880 745 862 730 860 722" fill="none" stroke="#0a2a3a" stroke-width=".8"/>
                    <polygon points="880,684 899,695.500 899,718 880,729 861,718 861,695.500" fill="none" stroke="#000" stroke-width="4"/>
                    <polygon points="880,689 895,697.500 880,706 865,697.500" fill="#53808f"/>
                    <polygon points="865,697.500 880,706 880,724 865,715" fill="#3c7189"/>
                    <polygon points="895,697.500 880,706 880,724 895,715" fill="#1e5f80"/>
                    <text class="logo-main" x="924" y="714" textLength="177" lengthAdjust="spacingAndGlyphs">3D世界网</text>
                    <text class="logo-sub" x="926" y="735" textLength="173" lengthAdjust="spacingAndGlyphs">WWW.3DSJW.COM</text>
                </g>
            </svg>

            <div class="dialog">
                <div class="dialog-title">
                    <svg class="dlg-gear"><use href="#d-gear"/></svg>
                    <span>圆柱压缩弹簧</span>
                    <svg class="dlg-reset"><use href="#d-reset"/></svg>
                    <b class="dlg-help">?</b>
                    <svg class="dlg-close"><use href="#d-close"/></svg>
                </div>
                <div class="dialog-body">
                    <div class="steps">
                        <div class="step">类型</div>
                        <div class="step selected">输入参数</div>
                        <div class="step">显示结果</div>
                    </div>
                    <div class="params">
                        <div class="params-head">输入弹簧参数</div>
                        <div class="card">
                            <div class="card-title"><span>输入参数</span><svg class="chev-big"><use href="#d-chev"/></svg></div>
                            <div class="card-inner">
                                <div class="section">
                                    <div class="section-title"><span>结构</span><svg class="chev"><use href="#d-chev"/></svg></div>
                                    <div class="radio-box">
                                        <div class="radio-title">旋向</div>
                                        <div class="radio-row">
                                            <i class="radio"></i><span class="radio-label">左旋</span>
                                            <i class="radio on"></i><span>右旋</span>
                                        </div>
                                    </div>
                                    <div class="form-row tight">
                                        <label>端部结构</label>
                                        <div class="field w140 zh"><span class="val">并紧磨平</span><i class="caret"></i></div>
                                    </div>
                                </div>
                                <div class="section second">
                                    <div class="section-title"><span>参数输入</span><svg class="chev"><use href="#d-chev"/></svg></div>
                                    <div class="form-list">
                                        <div class="form-row"><label>中间直径</label><div class="field w140"><span class="val">32</span><span class="unit">mm</span><i class="caret"></i></div></div>
                                        <div class="form-row"><label>钢丝直径</label><div class="field w140"><span class="val">4.5</span><span class="unit">mm</span><i class="caret"></i></div></div>
                                        <div class="form-row"><label>自由高度</label><div class="field w140"><span class="val">65</span><span class="unit">mm</span><i class="caret"></i></div></div>
                                        <div class="form-row short"><label>有效圈数</label><div class="field w98"><span class="val">6</span><i class="caret"></i></div></div>
                                        <div class="form-row short"><label>支承圈数</label><div class="field w98"><span class="val">2</span><i class="caret"></i></div></div>
                                    </div>
                                </div>
                            </div>
                        </div>
                    </div>
                </div>
                <div class="dialog-foot">
                    <button type="button">&lt; 上一步</button>
                    <button type="button" class="primary">下一步 &gt;</button>
                    <button type="button" class="disabled">完成</button>
                    <button type="button">取消</button>
                </div>
            </div>
        </div>
    </div>
</body>

</html>
```

FILE: styles.css
```css
* {
    box-sizing: border-box;
}

body {
    margin: 0;
    width: 1127px;
    height: 761px;
    overflow: hidden;
    background-color: #fff;
    color: #222;
    font-family: "Noto Sans CJK SC", "Noto Sans", sans-serif;
    font-size: 12px;
}

i {
    display: block;
    flex: none;
}

svg {
    display: block;
    flex: none;
}

.icon-sheet {
    position: absolute;
    width: 0;
    height: 0;
}

.caret {
    width: 0;
    height: 0;
    border-left: 3.5px solid transparent;
    border-right: 3.5px solid transparent;
    border-top: 4px solid #222;
}

.caret.light {
    border-top-color: #aaa;
}

.caret.up {
    border-top: 0;
    border-bottom: 5px solid #111;
}

.vsep {
    width: 1px;
    height: 18px;
    background-color: #ccc;
}

/* title bar */
.titlebar {
    position: relative;
    display: flex;
    align-items: center;
    height: 24px;
    padding-left: 3px;
}

.nx-logo {
    width: 32px;
    margin-right: 5px;
    color: #8aa4b8;
    font-family: "Liberation Sans", sans-serif;
    font-size: 23px;
    font-weight: bold;
}

.tb-icon {
    width: 16px;
    height: 16px;
    margin-left: 7px;
    color: #333;
}

.titlebar .vsep + .tb-icon {
    margin-left: 6px;
}

.titlebar .tb-save {
    margin-left: 9px;
}

.titlebar .tb-icon + .vsep,
.titlebar .caret + .vsep {
    margin-left: 6px;
}

.titlebar .tb-undo {
    width: 18px;
    margin-left: 5px;
}

.titlebar .tb-redo {
    margin-left: 7px;
    color: #bbb;
    transform: scaleX(-1);
}

.titlebar .caret {
    margin-left: 7px;
}

.tb-text {
    width: 25px;
    margin-left: 4px;
    font-size: 11px;
}

.titlebar .caret-tight {
    margin-left: 0;
}

.titlebar .caret-bar {
    position: relative;
    margin-left: 6px;
}

.caret-bar::before {
    content: "";
    position: absolute;
    left: -3.5px;
    top: -7px;
    width: 7px;
    height: 1px;
    background-color: #222;
}

.app-title {
    position: absolute;
    left: 942px;
    top: 2px;
    font-size: 13px;
    line-height: 18px;
}

/* ribbon tabs */
.tabs {
    display: flex;
    height: 30px;
    background-color: #dcdcdc;
    font-size: 13px;
    line-height: 30px;
}

.tab-file {
    width: 80px;
    margin-right: 5px;
    background-color: #55a0ba;
    color: #fff;
    text-align: center;
}

.tab {
    padding: 0 16px;
}

.tab.active {
    background-color: #fff;
    color: #0f6b8e;
}

/* ribbon */
.ribbon {
    display: flex;
    height: 94px;
    padding: 5px 0 3px;
    border-bottom: 1px solid #ddd;
    background-color: #fff;
}

.group {
    display: flex;
    flex-direction: column;
    height: 85px;
    border-right: 1px solid #ddd;
    font-size: 11px;
}

.g-build { width: 108px; }
.g-basic { width: 466px; }
.g-sync { width: 190px; }
.g-std { width: 104px; }
.g-gear { width: 52px; }
.g-spring { width: 58px; }
.g-cam { width: 52px; }
.g-model { width: 97px; border-right: 0; }

.group-body {
    display: flex;
    flex: 1;
    padding-left: 8px;
}

.g-build .group-body {
    padding-left: 11px;
}

.group-foot {
    display: flex;
    align-items: center;
    height: 16px;
    padding: 4px 8px 0 0;
    color: #0f6b8e;
}

.group-foot span {
    flex: 1;
    text-align: center;
    white-space: nowrap;
}

.group-foot .caret {
    margin-left: 6px;
}

.group-foot.left {
    padding: 4px 7px 0 2px;
}

.group-foot.left span {
    text-align: left;
}

.big {
    position: relative;
    display: flex;
    flex-direction: column;
    align-items: center;
    width: 41px;
    line-height: 16px;
}

.big.wide {
    width: 46px;
}

.big svg {
    width: 32px;
    height: 32px;
    margin-bottom: 4px;
}

.big .caret {
    margin-top: 5px;
}

.big .overlay {
    position: absolute;
    left: 16px;
    top: 12px;
    width: 20px;
    height: 20px;
}

.feature-stack {
    display: flex;
    flex-direction: column;
    gap: 11px;
    margin-left: 6px;
    padding-top: 4px;
}

.feature {
    display: flex;
    align-items: center;
    gap: 4px;
}

.feature svg {
    width: 24px;
    height: 24px;
}

.g-sync .big {
    width: 40px;
}

.sync-stack {
    display: flex;
    flex-direction: column;
    gap: 4px;
    margin: -2px 0 0 5px;
}

.sync-item {
    display: flex;
    align-items: center;
    gap: 4px;
    height: 19px;
}

.sync-item svg {
    width: 17px;
    height: 17px;
}

.mini-grid {
    display: flex;
    flex: 1;
    flex-wrap: wrap;
    align-content: flex-start;
    gap: 12px 6px;
    padding: 7px 0 0 8px;
}

.mini-grid svg {
    width: 17px;
    height: 18px;
}

.mini-sep {
    width: 1px;
    height: 18px;
    margin: 0 -1px;
    background-color: #ccc;
}

.mini-sep.blank {
    background-color: transparent;
}

.mini-sep.far {
    margin-right: 5px;
}

.g-gear .mini-grid { padding-left: 7px; gap: 12px 7px; }
.g-spring .mini-grid { padding-left: 7px; gap: 12px 3px; }

.bino {
    width: 20px;
    height: 20px;
    font-family: "Liberation Sans", sans-serif;
    font-size: 8px;
    font-weight: bold;
    line-height: 8px;
    white-space: nowrap;
}

.mini-grid .bino svg {
    width: 20px;
    height: 10px;
}

.bino b {
    color: #a01818;
}

/* toolbar */
.toolbar {
    display: flex;
    align-items: center;
    height: 29px;
    padding-left: 12px;
    border-bottom: 1px solid #8a9299;
    background-color: #fff;
}

.menu-icon {
    width: 14px;
    height: 12px;
}

.menu-text {
    width: 39px;
    margin-left: 3px;
    font-size: 12px;
    white-space: nowrap;
}

.toolbar .vsep {
    height: 21px;
    margin-left: 7px;
}

.combo {
    display: flex;
    align-items: center;
    justify-content: space-between;
    height: 23px;
    padding: 0 4px 0 3px;
    border: 1px solid #aaa;
    color: #aaa;
    font-size: 11px;
}

.combo-a {
    width: 149px;
    margin-left: 12px;
    justify-content: flex-end;
}

.combo-b {
    width: 156px;
    margin-left: 8px;
}

.bar-icon {
    width: 17px;
    height: 17px;
    margin-left: 7px;
}

.bar-icon.first {
    margin-left: 9px;
}

.toolbar .caret {
    margin-left: 6px;
}

.toolbar .combo .caret {
    margin-left: 0;
}

/* main area */
.main {
    display: flex;
    height: 584px;
}

.side-strip {
    display: flex;
    flex-direction: column;
    align-items: center;
    width: 32px;
    border-right: 1px solid #9a9a9a;
    background-color: #dcdcdc;
}

.strip-gear { width: 16px; height: 16px; margin-top: 5px; margin-right: 4px; }
.strip-part { width: 20px; height: 24px; margin-top: 28px; }

.strip-active {
    display: flex;
    align-items: center;
    justify-content: center;
    width: 31px;
    height: 45px;
    margin-top: 7px;
    margin-right: -2px;
    background-color: #fff;
    border-top: 1px solid #aaa;
    border-bottom: 1px solid #aaa;
    border-left: 1px solid #aaa;
}

.strip-active svg { width: 26px; height: 24px; }
.strip-globe { width: 24px; height: 24px; margin-top: 20px; }
.strip-clock { width: 24px; height: 24px; margin-top: 30px; margin-right: 1px; }
.strip-tools { width: 23px; height: 23px; margin-top: 19px; }

.navigator {
    display: flex;
    flex-direction: column;
    width: 219px;
    padding-left: 6px;
    border-right: 1px solid #ccc;
}

.nav-title {
    display: flex;
    align-items: center;
    justify-content: space-between;
    height: 29px;
    padding: 0 16px 0 3px;
}

.restore {
    width: 12px;
    height: 11px;
    border: 1px solid #222;
    border-top-width: 2px;
}

.tree {
    position: relative;
    flex: 1;
    width: 202px;
    margin-right: 10px;
    border: 1px solid #ddd;
    border-bottom: 0;
    background-image: repeating-linear-gradient(#fff 0 19px, #ececec 19px 20px, #f9f9f9 20px 39px, #ececec 39px 40px);
    background-position: 0 21px;
    background-repeat: no-repeat;
}

.tree-head {
    display: flex;
    align-items: center;
    gap: 14px;
    height: 21px;
    padding: 0 0 2px 6px;
    background-color: #f0f0f0;
    border-bottom: 1px solid #ddd;
}

.tree-line {
    position: absolute;
    left: 9px;
    top: 30px;
    width: 1px;
    height: 84px;
    border-left: 1px dotted #999;
}

.tree-row {
    position: relative;
    display: flex;
    align-items: center;
    height: 20px;
    padding: 0 0 2px 5px;
}

.exp {
    position: relative;
    width: 9px;
    height: 9px;
    margin-right: 5px;
    background-color: #fff;
    border: 1px solid #bbb;
}

.exp::before {
    content: "";
    position: absolute;
    left: 1px;
    top: 3px;
    width: 5px;
    height: 1px;
    background-color: #111;
}

.exp.plus::after {
    content: "";
    position: absolute;
    left: 3px;
    top: 1px;
    width: 1px;
    height: 5px;
    background-color: #111;
}

.nd {
    width: 16px;
    height: 16px;
}

.lab {
    margin-left: 3px;
    white-space: nowrap;
}

.tree-row.child {
    padding-left: 38px;
}

.elbow {
    position: absolute;
    left: 27px;
    top: 0;
    width: 11px;
    height: 10px;
    border-left: 1px dotted #999;
    border-bottom: 1px dotted #999;
}

.lab.strong {
    font-weight: bold;
}

/* doc area */
.workarea {
    position: relative;
    flex: 1;
    min-width: 0;
    background-color: #fff;
}

.doc-tabs {
    display: flex;
    height: 23px;
    background-color: #fff;
    font-size: 12px;
}

.doc-tab {
    display: flex;
    align-items: center;
    gap: 4px;
    width: 96px;
    height: 21px;
    padding-left: 6px;
}

.doc-tab svg {
    width: 16px;
    height: 16px;
}

.doc-tab.current {
    gap: 3px;
    width: 133px;
    background-color: #55a0ba;
    color: #fff;
}

.doc-tab .tab-part {
    width: 17px;
}

.doc-tab .tab-edit {
    width: 9px;
    height: 11px;
    margin-left: 5px;
}

.doc-tab .tab-x {
    width: 10px;
    height: 10px;
    margin-left: 4px;
    opacity: 0.6;
}

.graphics {
    width: 875px;
    height: 561px;
    margin-left: 1px;
    background-color: #000;
}

.axis {
    font-family: "Liberation Sans", sans-serif;
    font-size: 14px;
}

.logo-main {
    fill: #7f7f7f;
    font-family: "Noto Sans CJK SC", sans-serif;
    font-size: 38px;
    font-weight: bold;
}

.logo-sub {
    fill: #808080;
    font-family: "Liberation Sans", sans-serif;
    font-size: 11px;
    font-weight: bold;
}

/* dialog */
.dialog {
    position: absolute;
    left: 0;
    top: 21px;
    display: flex;
    flex-direction: column;
    width: 541px;
    height: 516px;
    background-color: #eee;
}

.dialog-title {
    display: flex;
    align-items: center;
    flex: none;
    height: 26px;
    padding: 0 8px;
    background-color: #55a0ba;
    color: #fff;
    font-size: 14px;
}

.dlg-gear {
    width: 14px;
    height: 14px;
    margin-right: 8px;
}

.dlg-reset {
    width: 13px;
    height: 13px;
    margin-left: auto;
}

.dlg-help {
    width: 26px;
    font-family: "Liberation Sans", sans-serif;
    font-size: 16px;
    text-align: center;
}

.dlg-close {
    width: 13px;
    height: 13px;
    margin-left: 4px;
}

.dialog-body {
    display: flex;
    gap: 10px;
    height: 443px;
    padding: 10px 0 0 12px;
}

.steps {
    width: 172px;
    height: 429px;
    padding-top: 1px;
    border: 1px solid #d8d8d8;
    background-image: repeating-linear-gradient(#fff 0 19px, #ececec 19px 20px, #f9f9f9 20px 39px, #ececec 39px 40px);
}

.step {
    height: 20px;
    padding-left: 20px;
    line-height: 20px;
}

.step.selected {
    margin: 0 1px 0 17px;
    padding-left: 3px;
    background-color: #8ac1d3;
}

.params {
    width: 335px;
}

.params-head {
    height: 53px;
    line-height: 48px;
}

.card {
    height: 374px;
    background-color: #fff;
    border-bottom: 2px solid #d0d0d0;
}

.card-title {
    display: flex;
    align-items: center;
    justify-content: space-between;
    height: 30px;
    padding: 0 6px 6px 7px;
    color: #0f6b8e;
    font-size: 14px;
    line-height: 24px;
}

.chev-big {
    width: 12px;
    height: 8px;
}

.chev {
    width: 10px;
    height: 7px;
    margin-right: -2px;
}

.card-inner {
    height: 334px;
    margin: 0 9px;
    padding: 2px 4px 0 2px;
    border: 1px solid #ddd;
}

.section {
    height: 116px;
    padding: 0 8px;
    background-color: #eee;
    border: 1px solid #ddd;
}

.section.second {
    height: 168px;
    margin-top: 2px;
}

.section-title {
    display: flex;
    align-items: center;
    justify-content: space-between;
    height: 23px;
    padding-bottom: 3px;
    margin-bottom: 6px;
    color: #0f6b8e;
    line-height: 20px;
}

.radio-box {
    height: 49px;
    padding: 2px 0 0 4px;
    background-color: #fff;
    border: 1px solid #ccc;
}

.radio-title {
    padding-left: 4px;
    color: #0f6b8e;
    line-height: 18px;
}

.radio-row {
    display: flex;
    align-items: center;
    height: 26px;
}

.radio {
    position: relative;
    width: 13px;
    height: 13px;
    margin-right: 5px;
    background-color: #fff;
    border: 1px solid #555;
    border-radius: 50%;
}

.radio.on::after {
    content: "";
    position: absolute;
    left: 2px;
    top: 2px;
    width: 7px;
    height: 7px;
    background-color: #444;
    border-radius: 50%;
}

.radio-label {
    width: 38px;
}

.form-row {
    display: flex;
    align-items: center;
    justify-content: space-between;
    height: 25px;
}

.form-row label {
    margin-top: -2px;
}

.form-row.tight {
    margin-top: 3px;
}

.form-row.short {
    height: 23px;
}

.form-list {
    display: flex;
    flex-direction: column;
    gap: 2px;
}

.field {
    display: flex;
    align-items: center;
    height: 100%;
    padding: 0 5px 0 3px;
    background-color: #fff;
    border: 1px solid #aaa;
    font-size: 13px;
    line-height: 21px;
}

.field.zh {
    font-size: 12px;
}

.w140 { width: 140px; }
.w98 { width: 98px; }

.val {
    flex: 1;
}

.unit {
    width: 43px;
    color: #333;
}

.dialog-foot {
    display: flex;
    justify-content: flex-end;
    gap: 2px;
    width: 519px;
    height: 35px;
    margin-left: 12px;
    padding: 5px 11px 0 0;
    border-top: 1px solid #d8d8d8;
}

button {
    width: 96px;
    height: 29px;
    padding: 0;
    background-color: #eee;
    border: 1px solid #aaa;
    color: #222;
    font-family: inherit;
    font-size: 12px;
    word-spacing: 3px;
}

button.primary {
    background-color: #72b3c9;
    border-color: #72b3c9;
    color: #fff;
}

button.disabled {
    border-color: #d4d4d4;
    color: #aaa;
}
```
